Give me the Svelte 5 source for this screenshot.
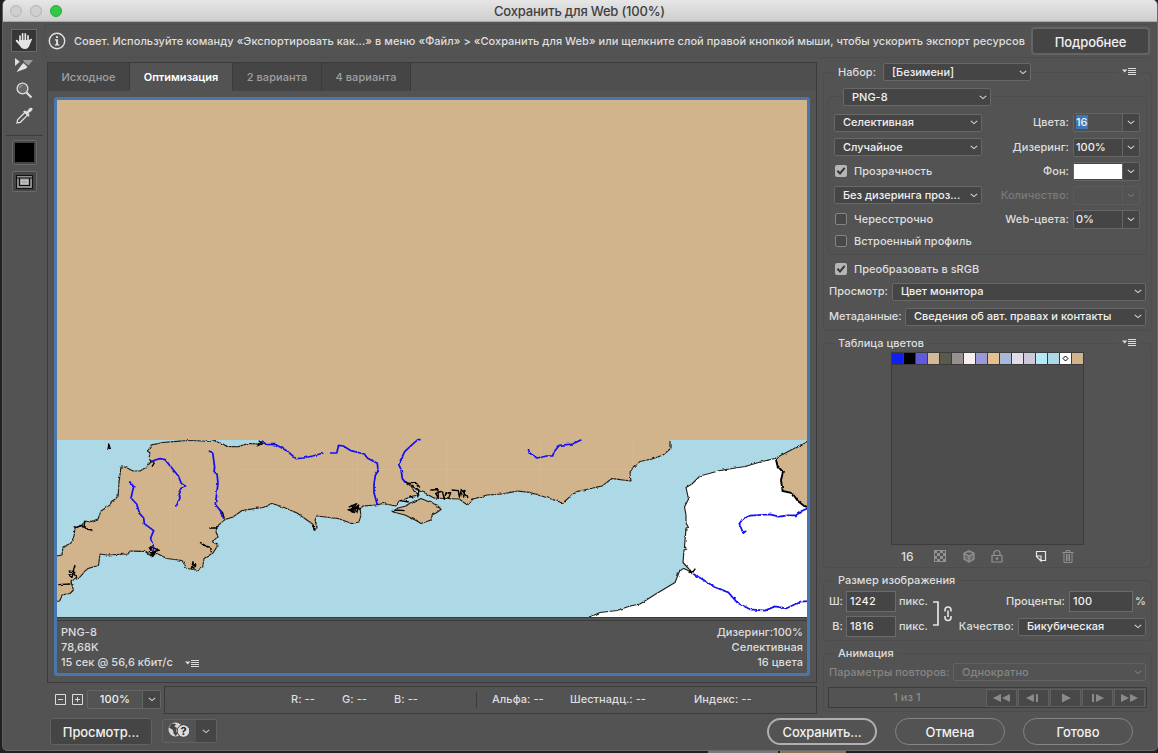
<script>
  const swatches = ['#1020f0', '#000000', '#6159dc', '#d3b996', '#58594f', '#989090', '#f6efef', '#9c98dc', '#e4c18c', '#a8b8d8', '#e2dce8', '#cec7dc', '#b6e9f8', '#add8e6', '#ffffff', '#d2b48c'];
  const playback = ['M5 4v8L-3 8zM14 4v8L6 8z', 'M6 4v8L-2 8zM8 4h2v8H8z', 'M2 3.5v9L11 8z', 'M0 4h2v8H0zM4 4v8l8-4z', 'M-3 4v8L5 8zM6 4v8l8-4z'];
  const readings = [['R: --', 127], ['G: --', 178], ['B: --', 230]];
  const extra = [['Альфа: --', 16], ['Шестнадц.: --', 94], ['Индекс: --', 218]];
  const north = '57,556 62,555 63,547 71,543 74,536 75,528 81,526 85,521 90,522 98,519 101,511 110,505 112,501 118,497.5 119,482 121,467 125,467 133,471 140,471 145,468 151,462 149,458 150,453 147,450.5 151,448 151,445 163,442.5 183,440.8 193,440.5 210,441.5 215,440.5 223,444 227,446.5 238,446.7 248,443.5 259,444 263,440.5';
  const south = '670,440 670,449 663,455 652,459 640,461.5 633,467 630,473 631,481 612,478.5 602,486 575,492 563,503 548,498 530,492.5 517,491 503,494 487,495 473,499 467.5,505 459,499 445,498.5 434,498 425,493 417,490 410,484.5 404,481 411,486 414,491 419,495 413,496 405,499 398,501.5 396,506 383,503.5 376,505 363,506 360,509 361,515 359,522 352,523.5 338,518.5 317,516 315,520 317,528 314,530 312.5,524 297,513 283,507 272,503.5 263,507.5 255,508.5 242,510.5 233,517 225,519.5 217,526.5 216,532 218,537 212,541.5 218,545 213,553 204,558.5 202.5,568 197,570 187,568.5 182,560.5 167,558.5 157,553.5 151,556 145,551.5 130,551 128,554 107,555 100,554 98.5,565.5 88,568.5 85,571 80,577 75,578.5 71,582 73.5,590 70,593.5 62,595 59.5,601.5 57,601';
  const france = '590,617 600,612.5 617,610.5 630,606 640,604 655,594.5 675,582.5 680,570 684,568.5 688,570.5 692,573 689,569 683,562.5 684,550 687,549 684.5,546.5 686,528 688.5,527.5 686,523 686,515 684.5,507 688.5,499 686,487.5 692,484 700,476 720,470.5 745,466.5 762,461.5 775,458.5';
  const border = '775.6,458 777.5,466 783,472 781,480 782.5,491 792,493 798,501 804,506 808,507';
  const isle = '393,512 398,508 406,506 410,503 418,500 421,498.5 427,501 433,503.5 437,505 441,509.5 436,513 432,515 431,520 421,523.5 417,521 405,515';
</script>

{#snippet chevron()}
  <svg class="chev" width="8" height="5" viewBox="0 0 8 5"><path d="M.8 .9 4 3.600 7.200 .9" fill="none" stroke="currentColor" stroke-width="1.050" /></svg>
{/snippet}
{#snippet select(text, width, off = false)}
  <div class="select" class:off style="width:{width}px"><span>{text}</span>{@render chevron()}</div>
{/snippet}
{#snippet combo(text, kind = '')}
  <div class="combo {kind}"><div class="value"><span>{text}</span></div><div class="drop">{@render chevron()}</div></div>
{/snippet}
{#snippet menu()}
  <svg class="menu" width="14" height="9" viewBox="0 0 14 9"><path d="M0 2.500h5.400L2.700 5.500z" fill="#dcdcdc" /><path d="M6 1.500h8M6 3.500h8M6 5.500h8M6 7.500h8" stroke="#dcdcdc" stroke-width="1" /></svg>
{/snippet}
{#snippet check(on)}
  <i class="check" class:on>{#if on}<svg width="12" height="12" viewBox="0 0 12 12"><path d="M2.400 5.800 5 8.500 9.700 2.800" fill="none" stroke="#383838" stroke-width="2" /></svg>{/if}</i>
{/snippet}

<div class="desktop">
  <div class="window">
    <header class="titlebar"><i></i><i></i><i class="zoomer"></i><b>Сохранить для Web (100%)</b></header>
    <div class="content">
      <aside class="tools">
        <div class="tool active">
          <svg width="18" height="18" viewBox="0 0 18 18"><path d="M5 10V4.100M7.600 9V1.800M10.300 9V1.800M13 10V3.800" stroke="#e4e4e4" stroke-width="1.700" stroke-linecap="round" /><path d="M4 8h10l2-1.200q1.400-.4 1 .8l-2 4.400c-1 3.400-2.500 5-5 5-3 0-4-1.300-5.300-3.500L1 9.500q-.8-1.500.6-1.700Q3 7.800 4 10z" fill="#e4e4e4" /></svg>
        </div>
        <div class="tool">
          <svg width="18" height="15" viewBox="0 0 18 15"><path d="M0 0v8l4.800-4.200z" fill="#dedede" /><path d="M8 2h10l-4.500 5.500L10 5z" fill="#9a9a9a" /><path d="m1.500 14 5-7L8.500 5l4 4-1.500 1.500z" fill="#e4e4e4" /></svg>
        </div>
        <div class="tool">
          <svg width="17" height="17" viewBox="0 0 17 17"><circle cx="6.500" cy="6.500" r="5.400" fill="#686868" stroke="#dedede" stroke-width="1.300" /><path d="M3.500 6.200q.7-2.500 3-2.800" fill="none" stroke="#aaa" /><path d="m10.500 10.500 5 5" stroke="#dedede" stroke-width="2.200" /></svg>
        </div>
        <div class="tool">
          <svg width="17" height="17" viewBox="0 0 17 17"><path d="M8.800 5.500 1.600 12.700 1 16l3.300-.7 7.200-7.200" fill="#535353" stroke="#dedede" stroke-width="1.300" /><path d="m7 4.500 2-1 2 1q2.600-5 5-3.500t-3.500 5l1 2-1 2z" fill="#dedede" /></svg>
        </div>
        <hr />
        <div class="chip"><i></i></div>
        <div class="chip slice">
          <svg width="17" height="14" viewBox="0 0 17 14"><rect x=".5" y=".5" width="16" height="13" fill="#8c8c8c" stroke="#111" /><path d="M0 3h17M3.500 3v8M13.500 3v8M3 10.500h11" stroke="#111" stroke-width="1.200" /><rect x="5" y="5" width="7" height="4" fill="#aaa" stroke="#ddd" stroke-width=".7" /></svg>
        </div>
      </aside>

      <div class="rest">
        <div class="tip">
          <svg width="18" height="18" viewBox="0 0 18 18"><circle cx="9" cy="9" r="7.700" fill="none" stroke="#e2e2e2" stroke-width="1.400" /><path d="M8 4.300h2v1.800H8zM7 7.300h3v5h1.300v1.200H6.800v-1.200h1.300V8.500H7z" fill="#e2e2e2" /></svg>
          <span>Совет. Используйте команду «Экспортировать как...» в меню «Файл» &gt; «Сохранить для Web» или щелкните слой правой кнопкой мыши, чтобы ускорить экспорт ресурсов</span>
          <button class="more">Подробнее</button>
        </div>
        <div class="columns">
          <main>
            <section class="viewer">
              <nav><span class="t1">Исходное</span><span class="t2">Оптимизация</span><span class="t3">2 варианта</span><span class="t4">4 варианта</span></nav>
              <div class="preview">
                <svg class="map" width="750" height="517" viewBox="57 100 750 517">
                  <defs>
                    <filter id="rough" filterUnits="userSpaceOnUse" x="50" y="425" width="770" height="205" color-interpolation-filters="sRGB">
                      <feTurbulence type="fractalNoise" baseFrequency=".2" numOctaves="2" seed="4" />
                      <feDisplacementMap in="SourceGraphic" scale="2.600" xChannelSelector="R" yChannelSelector="G" />
                    </filter>
                  </defs>
                  <rect x="57" y="100" width="750" height="517" fill="#d2b48c" />
                  <rect x="57" y="440" width="750" height="177" fill="#add8e6" />
                  <g filter="url(#rough)">
                    <polygon points="50,557 {north} 263,430 670,430 {south} 50,601" fill="#d2b48c" />
                    <polygon points="586,630 {france} 815,437 815,630" fill="#fff" />
                    <polygon points="{border} 815,507 815,437" fill="#d2b48c" />
                    <g fill="none" stroke="#221c17" stroke-width="1.150" stroke-linejoin="round">
                      <polyline points={north} stroke-dasharray="8 .6 3 .4" />
                      <polyline points={south} stroke-dasharray="8 .6 3 .4" />
                      <polyline points="{france} 808,441" />
                      <polygon points={isle} fill="#d2b48c" />
                    </g>
                    <polyline points={border} fill="none" stroke="#000" stroke-width="1.900" />
                    <g transform="translate(50 430) scale(.33333)" fill="none" stroke-linejoin="round">
                      <path stroke="#000" stroke-width="4" d="M174 55l2-13 5 14zM68 290l10 2 15-5M105 273l-3 15-14-2M103 288l10 10 14 2M75 405l-6 20-13-2M72 422l-6 20-10-7 20-8M80 444l-10-16M25 464l36-2M297 352l12 18-11-2 30-7-26-11 6 30 10-18-17 14M300 92l14 5-8 13M626 32l10 8-14 8M422 402l16 3-14 10 5-20 3 22M450 337l25 15M455 344l27 8 2 15M478 294l25 0M508 238l10 10 5 18M895 232l25-11-16 23 22-19-5 23-10-16 19 5-25-11 9 22-20-9 34-5M1065 155l15 5 20 0 10 13M1085 165l22 15-4 22M1144 180l20-1 1 25-8-14 20-7 6 25 5-20 14 0-7 19M1205 180l20 2 3 20 6-23 20 25M1236 184l9-3-4 20-9-15M1050 212l27 4M1080 197l10 8M788 282l7 20M1034 240l30 2M1920 420l10 8M1924 432l12-16" />
                      <path stroke="#1410f0" stroke-width="5.200" d="M238 154l13 16-8 34 17 18 9 29 12 13 2 17 28 21-9 22 9 31-2 10M303 96l12-6 15-4 15 3 10 12 30 37 9 22 14 10-15 5-6 12 3 17-13 29M476 63l12 4 6 45-2 13 9 7 3 28-8 63 16 21 7 22M637 37l13 6 28 1 35 20 25 22 22-2 28-6 32-9M840 69l20 0 6-23 14 2 23 14 40 10 10 13 29 15 2 24-8 12-4 28 0 24 10 36M1112 29h-8l-10 8-30 28-18 38 7 15 4 28 10 12M1435 57l4 12 22 15 30-6 17 0 4-12 16-20 40-4 26-13M1930 432l30 17 30 20 45 18 12 14 15 17 38 20 45 4 30-13 35 6 25-12 15-8 30-2M2080 309l7-5-8 4-11-27 10-14 22-10 60-4 27 7 26-4 25 0 17-13 30-13" />
                    </g>
                  </g>
                  <path d="M170.500 440v108M357.500 440v62M447.500 440v54M540.500 440v52M632.500 440v28M237 469.500h395" stroke="#dabb94" stroke-width=".7" opacity=".7" />
                </svg>
                <div class="meta">
                  <div>PNG-8<br />78,68K<br />15 сек @ 56,6 кбит/с {@render menu()}</div>
                  <div class="right">Дизеринг:100%<br />Селективная<br />16 цвета</div>
                </div>
              </div>
            </section>
            <div class="status">
              <svg width="12" height="12" viewBox="0 0 12 12"><path d="M.5.5h10v10H.5zM3 5.500h5" fill="none" stroke="#dcdcdc" /></svg>
              <svg class="plus" width="12" height="12" viewBox="0 0 12 12"><path d="M.5.5h10v10H.5zM3 5.500h5M5.500 3v5" fill="none" stroke="#dcdcdc" /></svg>
              {@render combo('100%', 'scale')}
              <div class="info">
                <div class="rgb">{#each readings as [t, x]}<span style="grid-column:{x}">{t}</span>{/each}</div>
                <i class="divider"></i>
                <div class="more-info">{#each extra as [t, x]}<span style="grid-column:{x}">{t}</span>{/each}</div>
              </div>
            </div>
          </main>

          <aside class="settings">
            <section class="group preset">
              <div class="head"><span class="first">Набор:</span>{@render select('[Безимени]', 148)}<div class="mbox">{@render menu()}</div></div>
              <section class="group format">
                <div class="head">{@render select('PNG-8', 148)}</div>
                <div class="row r25">{@render select('Селективная', 148)}<span class="label">Цвета:</span>{@render combo('16', 'focus')}</div>
                <div class="row r24">{@render select('Случайное', 148)}<span class="label">Дизеринг:</span>{@render combo('100%')}</div>
                <div class="row r24">{@render check(true)}<span class="ctext">Прозрачность</span><span class="label">Фон:</span>{@render combo('', 'white')}</div>
                <div class="row r24">{@render select('Без дизеринга проз...', 148)}<span class="label dim">Количество:</span>{@render combo('', 'disabled')}</div>
                <div class="row r24">{@render check(false)}<span class="ctext">Чересстрочно</span><span class="label">Web-цвета:</span>{@render combo('0%')}</div>
                <div class="row r20">{@render check(false)}<span class="ctext">Встроенный профиль</span></div>
              </section>
              <div class="row srgb">{@render check(true)}<span class="ctext">Преобразовать в sRGB</span></div>
              <div class="row wide">Просмотр:{@render select('Цвет монитора', 254)}</div>
              <div class="row wide">Метаданные:{@render select('Сведения об авт. правах и контакты', 241)}</div>
            </section>
            <section class="group table">
              <div class="head"><b>Таблица цветов</b><div class="mbox">{@render menu()}</div></div>
              <div class="palette">
                {#each swatches as c, i}<i style="background:{c}">{#if i === 14}<svg width="11" height="11" viewBox="0 0 11 11"><path d="m5.500 3 2.500 2.500L5.500 8 3 5.500z" fill="none" stroke="#000" /></svg>{/if}</i>{/each}
              </div>
              <div class="ptools">
                <span>16</span>
                <svg width="12" height="12" viewBox="0 0 12 12"><rect x=".5" y=".5" width="11" height="11" fill="none" stroke="#929292" /><path d="M1 1h2v2H1zM6 1h3v2H6zM3 3h3v3H3zM9 3h2v3H9zM1 6h2v3H1zM6 6h3v3H6zM3 9h3v2H3zM9 9h2v2H9z" fill="#929292" /></svg>
                <svg width="12" height="13" viewBox="0 0 12 13"><path d="m6 .7 5 2.500v6L6 12 1 9.200v-6zM1 3.200 6 6l5-2.800M6 6v6" fill="#707070" stroke="#929292" stroke-width="1.200" /></svg>
                <svg width="12" height="13" viewBox="0 0 12 13"><path d="M3 5V3q0-2.500 3-2.500T9 3v2M1 5.500h10v6.500H1z" fill="none" stroke="#929292" stroke-width="1.200" /><circle cx="6" cy="8.500" r="1.300" fill="#929292" /></svg>
                <svg width="12" height="12" viewBox="0 0 12 12"><path d="M1.500 6V1.500h9v9H6M1 6h5v5L1 6" fill="none" stroke="#e8e8e8" stroke-width="1.200" /></svg>
                <svg width="12" height="13" viewBox="0 0 12 13"><path d="M.5 2.500h11M4 2V.6h4V2M2 3v9.400h8V3M4.500 4v7M6 4v7M7.500 4v7" fill="none" stroke="#929292" /></svg>
              </div>
            </section>
            <section class="group size">
              <div class="head"><b>Размер изображения</b></div>
              <div class="dims">
                <div class="wh"><span class="dl">Ш:</span><span class="input">1242</span><span>пикс.</span><span class="dl">В:</span><span class="input">1816</span><span>пикс.</span></div>
                <svg width="24" height="26" viewBox="0 0 24 26"><path d="M0 1h5v23H0" fill="none" stroke="#e4e4e4" stroke-width="1.700" /><path d="M12 10.500V9q0-3 3-3t3 3v1.500M12 15v1.500q0 3 3 3t3-3V15M15 9.500v6.500" fill="none" stroke="#e4e4e4" stroke-width="1.600" /></svg>
                <div class="scaling"><div>Проценты:<span class="input pct">100</span>%</div><div class="quality">Качество:{@render select('Бикубическая', 128)}</div></div>
              </div>
            </section>
            <section class="group anim">
              <div class="head"><b>Анимация</b></div>
              <div class="row loop"><span>Параметры повторов:</span>{@render select('Однократно', 193, true)}</div>
              <div class="player"><span>1 из 1</span>{#each playback as d}<i><svg width="12" height="16" viewBox="0 0 12 16"><path {d} fill="#8a8a8a" /></svg></i>{/each}</div>
            </section>
          </aside>
        </div>
        <footer>
          <button class="view">Просмотр...</button>
          <div class="browser">
            <svg width="24" height="18" viewBox="0 0 24 18"><circle cx="7.500" cy="7.500" r="7" fill="#d5d5d5" /><path d="M4 1.500 8 2 6.500 4.500 9 6 8 9l1.500 3-2 2-2-3-.5-3L1 5.500Q2 3 4 1.500z" fill="#454545" /><circle cx="15.500" cy="9" r="6.300" fill="#ddd" stroke="#454545" /><text x="15.500" y="13" text-anchor="middle">?</text></svg>
            <i>{@render chevron()}</i>
          </div>
          <button class="pill primary">Сохранить...</button><button class="pill">Отмена</button><button class="pill">Готово</button>
        </footer>
      </div>
    </div>
  </div>
  <div class="behind"><i></i><i></i></div>
</div>

<style>
  :global(body) { margin: 0; overflow: hidden; background: #202022; }
  * { box-sizing: border-box; }
  .desktop { width: 1158px; height: 753px; padding-left: 2px; background: #202022; font: 500 11px/15px Inter, "Noto Sans", sans-serif; letter-spacing: .05px; color: #dedede; white-space: nowrap; }
  svg { display: block; flex: none; overflow: visible; }
  .map { overflow: hidden; }
  .chev { opacity: .85; }
  i { font-style: normal; display: block; flex: none; }
  b { font-weight: 500; }
  button { font: inherit; letter-spacing: inherit; color: #f0f0f0; padding: 0; margin: 0; }
  .window { width: 1156px; height: 751px; border-radius: 5px; background: #535353; overflow: hidden; border-right: 1px solid #686868; border-bottom: 1px solid #6c6c6c; border-left: 1px solid #5f5f5f; }
  .titlebar { height: 22px; background: linear-gradient(#e6e6e6, #cecece); border-bottom: 1px solid #a9a9a9; display: flex; align-items: center; padding-left: 7px; gap: 8px; color: #404040; font-size: 13px; letter-spacing: -.2px; }
  .titlebar i { width: 12px; height: 12px; border-radius: 50%; background: #cfcfcf; border: 1px solid #b3b3b3; }
  .titlebar .zoomer { background: #34c84a; border-color: #28ad39; }
  .titlebar b { flex: 1; text-align: center; padding: 1px 68px 0 0; }
  .content { display: flex; height: 728px; }
  .tools { width: 41px; padding: 7px 0 0 8px; display: flex; flex-direction: column; }
  .tool { width: 26px; height: 25px; display: grid; place-items: center; }
  .tool.active { background: #363636; border: 1px solid #696969; height: 23px; margin-bottom: 1px; }
  hr { margin: 7px 3px 4px -5px; width: 37px; border: 0; border-top: 1px solid #3c3c3c; }
  .chip { width: 25px; height: 25px; border: 1px solid #6b6b6b; background: #454545; display: grid; place-items: center; margin: 0 0 6px 1px; border-radius: 2px; }
  .chip i { width: 19px; height: 19px; background: #000; }
  .chip.slice { height: 21px; }
  .rest { flex: 1; min-width: 0; }
  .tip { height: 34px; margin-top: 2px; border: 1px solid #4d4d4d; border-right: 0; border-radius: 3px; display: flex; align-items: center; padding-left: 3px; width: 1107px; }
  .tip span { margin-left: 8px; width: 957px; letter-spacing: .03px; }
  .more { width: 119px; height: 28px; border: 2px solid #646464; border-radius: 4px; background: #454545; font-size: 13px; letter-spacing: -.1px; padding-top: 2px; }
  .columns { display: flex; height: 653px; padding-left: 3px; }
  main { width: 770px; padding-top: 4px; }
  .viewer { height: 621px; border: 1px solid #3b3b3b; }
  nav { display: flex; height: 28px; color: #a0a0a0; background: #4f4f4f; }
  nav span { border-right: 1px solid #3b3b3b; border-bottom: 1px solid #454545; background: #454545; padding-top: 7px; text-align: center; }
  .t1 { width: 82px; } .t2 { width: 103px; } .t3 { width: 89px; } .t4 { width: 89px; }
  nav .t2 { background: #535353; color: #fff; border-bottom-color: #535353; font-weight: 600; letter-spacing: -.05px; }
  .preview { width: 756px; height: 579px; margin: 6px 0 0 6px; border: 3px solid #4777ac; border-radius: 2px; }
  .meta { display: flex; justify-content: space-between; border-top: 4px double #3b3b3b; padding: 4px 4px 0; letter-spacing: .05px; }
  .right { text-align: right; }
  .meta .menu { display: inline-block; margin-left: 9px; vertical-align: -2px; }
  .status { margin-top: 3px; height: 27px; display: flex; align-items: center; padding-left: 8px; }
  .plus { margin-left: 5px; }
  .info { margin-left: 3px; width: 654px; height: 28px; border: 1px solid #3b3b3b; display: flex; align-items: center; }
  .rgb { display: grid; grid-template-columns: repeat(311, 1px); }
  .divider { width: 1px; height: 16px; background: #3b3b3b; }
  .more-info { display: grid; grid-template-columns: repeat(330, 1px); }
  .rgb span, .more-info span { grid-row: 1; width: 0; }
  .settings { width: 329px; margin-left: 6px; padding-top: 14px; }
  .group { border: 1px solid #4d4d4d; border-radius: 4px; }
  .head { display: flex; align-items: center; height: 18px; margin-top: -10px; }
  .head b, .first, .mbox { background: #535353; }
  .head b { margin-left: 10px; padding: 0 4px; letter-spacing: .02px; }
  .first { margin-left: 10px; padding: 0 6px 0 4px; width: 49px; }
  .mbox { margin-left: auto; margin-right: 11px; padding: 2px 4px 3px; }
  .select { height: 18px; background: #454545; border: 1px solid #686868; border-radius: 2px; display: flex; align-items: center; justify-content: space-between; padding: 0 3px 0 8px; color: #f0f0f0; flex: none; letter-spacing: 0; }
  .select.off { background: transparent; color: #858585; border-color: #626262; }
  .combo { width: 67px; height: 19px; display: flex; border: 1px solid #656565; border-radius: 2px; flex: none; color: #f0f0f0; background: #454545; }
  .value { flex: 1; padding: 1px 2px; letter-spacing: 0; }
  .drop { width: 17px; border-left: 1px solid #656565; display: grid; place-items: center; }
  .focus .value { background: #4f4f4f; }
  .focus .value span { background: #3d78b8; }
  .white .value { background: #fff; margin: 1px 0; }
  .disabled { background: transparent; border-color: #5b5b5b; color: #7a7a7a; }
  .disabled .drop { border-color: #5b5b5b; }
  .preset { height: 259px; margin-bottom: 12px; }
  .format { margin: 15px 4px 0; height: 159px; }
  .format .head { margin-top: -9px; }
  .format .head .select { margin-left: 14px; }
  .row { display: flex; align-items: center; }
  .format .row { padding: 0 6px 0 5px; }
  .label { margin-left: auto; margin-right: 4px; }
  .dim { color: #7a7a7a; }
  .r25 { height: 33px; } .r24 { height: 24px; } .r20 { height: 20px; }
  .r25 + .r24 { margin-top: -4px; }
  .check { width: 12px; height: 12px; border: 1px solid #858585; border-radius: 2px; background: #484848; margin-left: 1px; }
  .check.on { background: #b5b5b5; border: 0; }
  .ctext { margin-left: 7px; letter-spacing: .02px; }
  .srgb { height: 22px; margin: 3px 0 1px 10px; }
  .wide { height: 25px; justify-content: space-between; padding: 0 5px; letter-spacing: 0; }
  .wide:nth-last-child(2) { height: 21px; margin-bottom: 2px; }
  .table { height: 225px; margin-bottom: 12px; }
  .palette { width: 193px; height: 193px; margin: 0 0 0 67px; border: 1px solid #3c3c3c; background: #4d4d4d; display: flex; gap: 1px; align-items: flex-start; }
  .palette i { width: 11px; height: 11px; outline: 1px solid #3c3c3c; }
  .ptools { display: flex; align-items: center; height: 22px; padding-left: 77px; }
  .ptools span { width: 33px; letter-spacing: 0; font-size: 12px; }
  .ptools svg + svg { margin-left: 17px; }
  .ptools svg:nth-child(4) { margin-left: 16px; }
  .ptools svg:nth-child(5) { margin-left: 32px; }
  .ptools svg:nth-child(6) { margin-left: 15px; }
  .size { height: 61px; margin-bottom: 12px; }
  .dims { display: flex; }
  .wh { display: grid; grid-template-columns: 15px 50px 33px; grid-auto-rows: 25px; align-items: center; padding-left: 4px; column-gap: 3px; width: 108px; }
  .dl { text-align: right; }
  .input { height: 21px; border: 1px solid #6b6b6b; background: #454545; color: #f0f0f0; padding: 2px 3px; letter-spacing: .2px; }
  .dims > svg { margin: 12px 0 0 1px; }
  .scaling { flex: 1; padding-right: 5px; }
  .scaling > div { display: flex; align-items: center; justify-content: flex-end; height: 25px; }
  .pct { width: 64px; margin: 0 2px 0 4px; }
  .quality .select { margin-left: 4px; }
  .anim { height: 59px; }
  .loop { justify-content: space-between; padding: 0 5px; height: 20px; color: #858585; letter-spacing: 0; }
  .player { margin: 5px 4px 0; padding-right: 1px; height: 21px; border: 1px solid #3c3c3c; display: flex; align-items: center; gap: 1px; color: #8a8a8a; }
  .player span { flex: 1; text-align: center; }
  .player i { width: 31px; height: 18px; border: 1px solid #606060; background: #484848; display: grid; place-items: center; }
  footer { display: flex; align-items: center; height: 30px; padding-left: 6px; margin-top: 5px; font-size: 13px; }
  .view { width: 102px; height: 27px; border: 1px solid #626262; border-radius: 3px; background: #454545; font-size: 13px; letter-spacing: -.1px; margin-right: 10px; padding-top: 2px; }
  .browser { width: 55px; height: 24px; border: 1px solid #626262; border-radius: 3px; display: flex; align-items: center; padding-left: 5px; margin-right: 550px; }
  .browser i { margin-left: 4px; background: #454545; flex: 1; height: 22px; display: grid; place-items: center; }
  .browser text { font: 700 11px Inter, sans-serif; fill: #222; }
  .pill { width: 110px; height: 27px; border: 1px solid #858585; border-radius: 14px; background: transparent; margin-right: 18px; font-size: 13px; flex: none; letter-spacing: -.1px; padding-top: 2px; }
  .pill.primary { border: 2px solid #b0b0b0; letter-spacing: -.2px; }
  .scale { width: 74px; background: transparent; margin-left: 3px; }
  .scale .value { text-align: center; letter-spacing: .2px; }
  .scale .drop { width: 18px; background: #454545; }
  .behind { height: 2px; display: flex; padding-left: 706px; }
  .behind i { width: 70px; height: 2px; background: #77777a; }
  .behind i + i { margin-left: 2px; width: 66px; background: #8b7558; }
</style>
